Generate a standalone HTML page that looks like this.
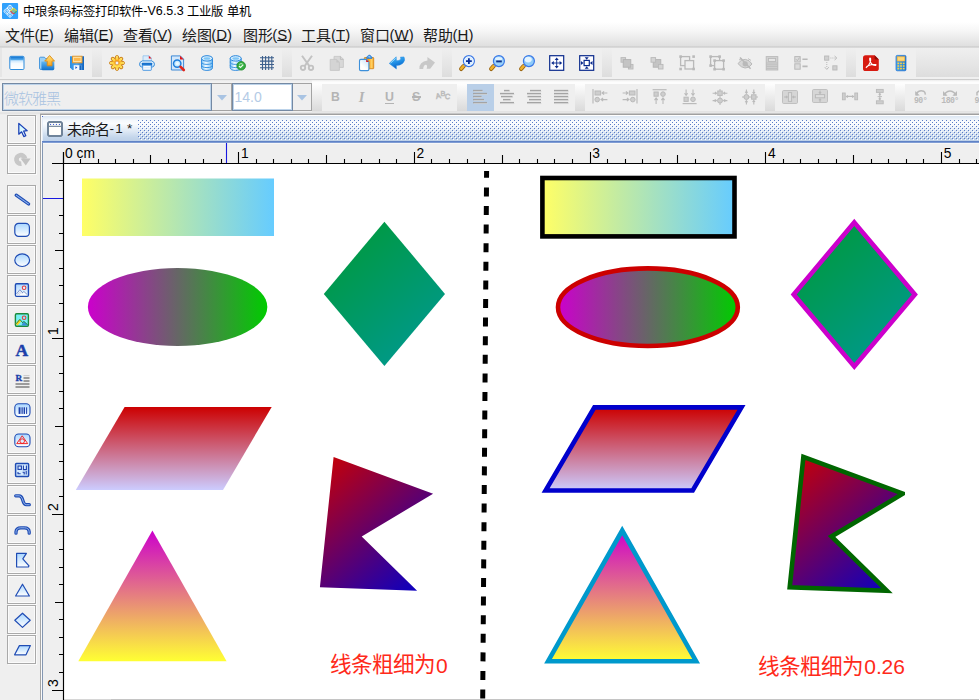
<!DOCTYPE html>
<html><head><meta charset="utf-8"><title>label</title>
<style>
html,body{margin:0;padding:0}
body{width:979px;height:700px;overflow:hidden;position:relative;background:#fff;font-family:"Liberation Sans",sans-serif}
.a{position:absolute;display:block;overflow:visible}
.t{white-space:pre}
u{text-decoration:underline;text-decoration-thickness:1px;text-underline-offset:0.3px;text-decoration-skip-ink:none}
</style></head><body>

<div class="a" style="left:0px;top:0px;width:979px;height:22px;background:#fff"></div>
<svg class="a" style="left:2px;top:3px" width="16" height="16" ><rect x="0" y="-0.1" width="16.1" height="16.1" rx="1" fill="#31a1fc"/><g transform="rotate(45 8 4.9)" fill="none" stroke="#fff" opacity="1"><rect x="5.7" y="2.6000000000000005" width="4.6" height="4.6" rx="1.5" stroke-width="0.85"/><rect x="6.95" y="3.8500000000000005" width="2.1" height="2.1" rx="0.8" stroke-width="0.8"/></g><g transform="rotate(45 4.7 8.2)" fill="none" stroke="#fff" opacity="1"><rect x="2.4000000000000004" y="5.8999999999999995" width="4.6" height="4.6" rx="1.5" stroke-width="0.85"/><rect x="3.6500000000000004" y="7.1499999999999995" width="2.1" height="2.1" rx="0.8" stroke-width="0.8"/></g><g transform="rotate(45 8 11.5)" fill="none" stroke="#fff" opacity="1"><rect x="5.7" y="9.2" width="4.6" height="4.6" rx="1.5" stroke-width="0.85"/><rect x="6.95" y="10.45" width="2.1" height="2.1" rx="0.8" stroke-width="0.8"/></g><g transform="rotate(45 11.6 8.1)" fill="none" stroke-width="1"><path d="M9.4 10.3V7.4Q9.4 5.9 10.9 5.9H13.8" stroke="#f2dc1e"/><path d="M9.4 10.3H12.3Q13.8 10.3 13.8 8.8" stroke="#e8403a"/><path d="M13.8 5.9V8.8" stroke="#48b848"/><rect x="10.7" y="7.2" width="1.8" height="1.8" rx="0.6" stroke="#f0d820" stroke-width="0.8"/></g></svg>
<svg class="a" style="left:22.70px;top:5.03px" width="122.3" height="13.5" fill="#000" ><text x="0" y="11.07" font-family="'Liberation Sans','Noto Sans CJK SC',sans-serif" font-size="12.3" letter-spacing="-0.3" fill="#000">中琅条码标签打印软件</text></svg>
<div class="a t" style="left:143.30px;top:4.79px;font:normal 12.5px/13.96px 'Liberation Sans',sans-serif;color:#000;">-V6.5.3</div>
<svg class="a" style="left:186.90px;top:5.03px" width="38.3" height="13.5" fill="#000" ><text x="0" y="11.07" font-family="'Liberation Sans','Noto Sans CJK SC',sans-serif" font-size="12.3" letter-spacing="-0.3" fill="#000">工业版</text></svg>
<svg class="a" style="left:226.80px;top:5.03px" width="26.3" height="13.5" fill="#000" ><text x="0" y="11.07" font-family="'Liberation Sans','Noto Sans CJK SC',sans-serif" font-size="12.3" letter-spacing="-0.3" fill="#000">单机</text></svg>
<div class="a" style="left:0px;top:22px;width:979px;height:25px;background:linear-gradient(#ffffff 0%,#f6f6f6 35%,#e9e9e9 70%,#dedede 100%)"></div>
<div class="a" style="left:0px;top:46px;width:979px;height:2px;background:linear-gradient(#cfcfcf,#dcdcdc)"></div>
<svg class="a" style="left:5.00px;top:27.40px" width="32.0" height="16.5" fill="#1a1a1a" ><text x="0" y="13.5" font-family="'Liberation Sans','Noto Sans CJK SC',sans-serif" font-size="15" fill="#1a1a1a">文件</text></svg>
<div class="a t" style="left:34.60px;top:27.42px;font:normal 15px/16.75px 'Liberation Sans',sans-serif;color:#1a1a1a;">(<u>F</u>)</div>
<svg class="a" style="left:64.00px;top:27.40px" width="32.0" height="16.5" fill="#1a1a1a" ><text x="0" y="13.5" font-family="'Liberation Sans','Noto Sans CJK SC',sans-serif" font-size="15" fill="#1a1a1a">编辑</text></svg>
<div class="a t" style="left:93.60px;top:27.42px;font:normal 15px/16.75px 'Liberation Sans',sans-serif;color:#1a1a1a;">(<u>E</u>)</div>
<svg class="a" style="left:122.60px;top:27.40px" width="32.0" height="16.5" fill="#1a1a1a" ><text x="0" y="13.5" font-family="'Liberation Sans','Noto Sans CJK SC',sans-serif" font-size="15" fill="#1a1a1a">查看</text></svg>
<div class="a t" style="left:152.20px;top:27.42px;font:normal 15px/16.75px 'Liberation Sans',sans-serif;color:#1a1a1a;">(<u>V</u>)</div>
<svg class="a" style="left:181.60px;top:27.40px" width="32.0" height="16.5" fill="#1a1a1a" ><text x="0" y="13.5" font-family="'Liberation Sans','Noto Sans CJK SC',sans-serif" font-size="15" fill="#1a1a1a">绘图</text></svg>
<div class="a t" style="left:211.20px;top:27.42px;font:normal 15px/16.75px 'Liberation Sans',sans-serif;color:#1a1a1a;">(<u>D</u>)</div>
<svg class="a" style="left:242.60px;top:27.40px" width="32.0" height="16.5" fill="#1a1a1a" ><text x="0" y="13.5" font-family="'Liberation Sans','Noto Sans CJK SC',sans-serif" font-size="15" fill="#1a1a1a">图形</text></svg>
<div class="a t" style="left:272.20px;top:27.42px;font:normal 15px/16.75px 'Liberation Sans',sans-serif;color:#1a1a1a;">(<u>S</u>)</div>
<svg class="a" style="left:301.40px;top:27.40px" width="32.0" height="16.5" fill="#1a1a1a" ><text x="0" y="13.5" font-family="'Liberation Sans','Noto Sans CJK SC',sans-serif" font-size="15" fill="#1a1a1a">工具</text></svg>
<div class="a t" style="left:331.00px;top:27.42px;font:normal 15px/16.75px 'Liberation Sans',sans-serif;color:#1a1a1a;">(<u>T</u>)</div>
<svg class="a" style="left:360.00px;top:27.40px" width="32.0" height="16.5" fill="#1a1a1a" ><text x="0" y="13.5" font-family="'Liberation Sans','Noto Sans CJK SC',sans-serif" font-size="15" fill="#1a1a1a">窗口</text></svg>
<div class="a t" style="left:389.60px;top:27.42px;font:normal 15px/16.75px 'Liberation Sans',sans-serif;color:#1a1a1a;">(<u>W</u>)</div>
<svg class="a" style="left:423.00px;top:27.40px" width="32.0" height="16.5" fill="#1a1a1a" ><text x="0" y="13.5" font-family="'Liberation Sans','Noto Sans CJK SC',sans-serif" font-size="15" fill="#1a1a1a">帮助</text></svg>
<div class="a t" style="left:452.60px;top:27.42px;font:normal 15px/16.75px 'Liberation Sans',sans-serif;color:#1a1a1a;">(<u>H</u>)</div>
<div class="a" style="left:0px;top:48px;width:979px;height:31px;background:linear-gradient(#efefef 0%,#e6e6e6 50%,#dcdcdc 100%)"></div>
<div class="a" style="left:0px;top:77px;width:979px;height:2px;background:#f0f0f0"></div>
<div class="a" style="left:0px;top:79px;width:979px;height:1px;background:#cdcdcd"></div>
<div class="a" style="left:1.5px;top:48px;width:90.9px;height:29px;background:#efefef"></div>
<div class="a" style="left:101.5px;top:48px;width:180.89999999999998px;height:29px;background:#efefef"></div>
<div class="a" style="left:292px;top:48px;width:150px;height:29px;background:#efefef"></div>
<div class="a" style="left:452px;top:48px;width:150px;height:29px;background:#efefef"></div>
<div class="a" style="left:612px;top:48px;width:234px;height:29px;background:#efefef"></div>
<div class="a" style="left:856px;top:48px;width:60px;height:29px;background:#efefef"></div>
<div class="a" style="left:0px;top:48px;width:1.5px;height:29px;background:#e6e6e6"></div>
<div class="a" style="left:0px;top:80px;width:979px;height:33px;background:linear-gradient(#ececec 0px,#fdfdfd 2px,#fdfdfd 4px,#dadada 31px,#ececec 32px)"></div>
<div class="a" style="left:0px;top:80px;width:312px;height:33px;background:linear-gradient(#e9e9e9 0px,#f3f3f3 2px,#f0f0f0 100%)"></div>
<div class="a" style="left:322px;top:84px;width:135px;height:27px;background:#efefef"></div>
<div class="a" style="left:467px;top:84px;width:108px;height:27px;background:#efefef"></div>
<div class="a" style="left:585px;top:84px;width:180px;height:27px;background:#efefef"></div>
<div class="a" style="left:775px;top:84px;width:120px;height:27px;background:#efefef"></div>
<div class="a" style="left:905px;top:84px;width:74px;height:27px;background:#efefef"></div>
<div class="a" style="left:0px;top:112px;width:979px;height:1px;background:#e6e6e6"></div>
<div class="a" style="left:0px;top:113px;width:40px;height:1px;background:#e4e4e4"></div>
<div class="a" style="left:40px;top:113px;width:939px;height:1px;background:#c6c6c6"></div>
<div class="a" style="left:0px;top:114px;width:40px;height:1px;background:#ededed"></div>
<div class="a" style="left:40px;top:114px;width:939px;height:1px;background:#a0a0a0"></div>
<div class="a" style="left:0px;top:115px;width:41px;height:1px;background:#f0f0f0"></div>
<div class="a" style="left:41px;top:115px;width:938px;height:1px;background:#fff"></div>
<div class="a" style="left:2px;top:83px;width:210px;height:28px;box-sizing:border-box;border:1px solid #7489a3;background:#efefef;box-shadow:inset 0 0 0 1px #bcd3ea"></div>
<div class="a" style="left:212px;top:83px;width:20px;height:28px;box-sizing:border-box;border:1px solid #a3a3a3;border-left:none;background:#efefef"></div>
<svg class="a" style="left:217px;top:95px" width="10" height="6" ><path d="M0 0H10L5 5.6z" fill="#a9c4e3"/></svg>
<svg class="a" style="left:3.90px;top:89.50px" width="59.0" height="16.5" fill="#a9c3e1" ><text x="0" y="13.5" font-family="'Liberation Sans','Noto Sans CJK SC',sans-serif" font-size="15" font-weight="300" letter-spacing="-1" fill="#a9c3e1">微软雅黑</text></svg>
<div class="a" style="left:232px;top:83px;width:61px;height:28px;box-sizing:border-box;border:1px solid #7489a3;background:#fff;box-shadow:inset 0 0 0 1px #bcd3ea"></div>
<div class="a" style="left:293px;top:83px;width:19px;height:28px;box-sizing:border-box;border:1px solid #a3a3a3;border-left:none;background:#efefef"></div>
<svg class="a" style="left:297px;top:95px" width="10" height="6" ><path d="M0 0H10L5 5.6z" fill="#a9c4e3"/></svg>
<div class="a t" style="left:234.50px;top:89.53px;font:normal 14px/15.64px 'Liberation Sans',sans-serif;color:#b4cbe6;">14.0</div>
<div class="a" style="left:0px;top:116px;width:979px;height:584px;background:#efefef"></div>
<div class="a" style="left:40px;top:115px;width:1px;height:585px;background:#a6a6a6"></div>
<div class="a" style="left:41px;top:116px;width:1px;height:584px;background:#fbfbfb"></div>
<div class="a" style="left:42px;top:141px;width:1px;height:559px;background:#8497b2"></div>
<div class="a" style="left:42px;top:116px;width:1px;height:25px;background:#e6eef8"></div>
<div class="a" style="left:7px;top:115px;width:29px;height:29px;box-sizing:border-box;border:1px solid #a9a9a9;background:#f0f0f0;box-shadow:inset 0 0 0 1px #fbfbfb,1px 1px 0 #fafafa"></div>
<div class="a" style="left:7px;top:145px;width:29px;height:29px;box-sizing:border-box;border:1px solid #a9a9a9;background:#f0f0f0;box-shadow:inset 0 0 0 1px #fbfbfb,1px 1px 0 #fafafa"></div>
<div class="a" style="left:7px;top:185px;width:29px;height:29px;box-sizing:border-box;border:1px solid #a9a9a9;background:#f0f0f0;box-shadow:inset 0 0 0 1px #fbfbfb,1px 1px 0 #fafafa"></div>
<div class="a" style="left:7px;top:215px;width:29px;height:29px;box-sizing:border-box;border:1px solid #a9a9a9;background:#f0f0f0;box-shadow:inset 0 0 0 1px #fbfbfb,1px 1px 0 #fafafa"></div>
<div class="a" style="left:7px;top:245px;width:29px;height:29px;box-sizing:border-box;border:1px solid #a9a9a9;background:#f0f0f0;box-shadow:inset 0 0 0 1px #fbfbfb,1px 1px 0 #fafafa"></div>
<div class="a" style="left:7px;top:275px;width:29px;height:29px;box-sizing:border-box;border:1px solid #a9a9a9;background:#f0f0f0;box-shadow:inset 0 0 0 1px #fbfbfb,1px 1px 0 #fafafa"></div>
<div class="a" style="left:7px;top:305px;width:29px;height:29px;box-sizing:border-box;border:1px solid #a9a9a9;background:#f0f0f0;box-shadow:inset 0 0 0 1px #fbfbfb,1px 1px 0 #fafafa"></div>
<div class="a" style="left:7px;top:335px;width:29px;height:29px;box-sizing:border-box;border:1px solid #a9a9a9;background:#f0f0f0;box-shadow:inset 0 0 0 1px #fbfbfb,1px 1px 0 #fafafa"></div>
<div class="a" style="left:7px;top:365px;width:29px;height:29px;box-sizing:border-box;border:1px solid #a9a9a9;background:#f0f0f0;box-shadow:inset 0 0 0 1px #fbfbfb,1px 1px 0 #fafafa"></div>
<div class="a" style="left:7px;top:395px;width:29px;height:29px;box-sizing:border-box;border:1px solid #a9a9a9;background:#f0f0f0;box-shadow:inset 0 0 0 1px #fbfbfb,1px 1px 0 #fafafa"></div>
<div class="a" style="left:7px;top:425px;width:29px;height:29px;box-sizing:border-box;border:1px solid #a9a9a9;background:#f0f0f0;box-shadow:inset 0 0 0 1px #fbfbfb,1px 1px 0 #fafafa"></div>
<div class="a" style="left:7px;top:455px;width:29px;height:29px;box-sizing:border-box;border:1px solid #a9a9a9;background:#f0f0f0;box-shadow:inset 0 0 0 1px #fbfbfb,1px 1px 0 #fafafa"></div>
<div class="a" style="left:7px;top:485px;width:29px;height:29px;box-sizing:border-box;border:1px solid #a9a9a9;background:#f0f0f0;box-shadow:inset 0 0 0 1px #fbfbfb,1px 1px 0 #fafafa"></div>
<div class="a" style="left:7px;top:515px;width:29px;height:29px;box-sizing:border-box;border:1px solid #a9a9a9;background:#f0f0f0;box-shadow:inset 0 0 0 1px #fbfbfb,1px 1px 0 #fafafa"></div>
<div class="a" style="left:7px;top:545px;width:29px;height:29px;box-sizing:border-box;border:1px solid #a9a9a9;background:#f0f0f0;box-shadow:inset 0 0 0 1px #fbfbfb,1px 1px 0 #fafafa"></div>
<div class="a" style="left:7px;top:575px;width:29px;height:29px;box-sizing:border-box;border:1px solid #a9a9a9;background:#f0f0f0;box-shadow:inset 0 0 0 1px #fbfbfb,1px 1px 0 #fafafa"></div>
<div class="a" style="left:7px;top:605px;width:29px;height:29px;box-sizing:border-box;border:1px solid #a9a9a9;background:#f0f0f0;box-shadow:inset 0 0 0 1px #fbfbfb,1px 1px 0 #fafafa"></div>
<div class="a" style="left:7px;top:635px;width:29px;height:29px;box-sizing:border-box;border:1px solid #a9a9a9;background:#f0f0f0;box-shadow:inset 0 0 0 1px #fbfbfb,1px 1px 0 #fafafa"></div>
<div class="a" style="left:43px;top:116px;width:936px;height:25px;background:linear-gradient(#dbe6f3 0%,#f4f8fc 18%,#fafcfe 30%,#dfe9f5 60%,#c4d6eb 85%,#bdd0e8 100%)"></div>
<div class="a" style="left:42px;top:141px;width:937px;height:1px;background:#5f82c6"></div>
<div class="a" style="left:42px;top:142px;width:937px;height:1px;background:#7f9cd3"></div>
<div class="a" style="left:43px;top:143px;width:936px;height:1px;background:#f7f7f7"></div>
<svg class="a" style="left:138px;top:120px" width="841" height="20"><defs>
<pattern id="dots" width="4" height="4" patternUnits="userSpaceOnUse">
<rect x="0" y="0" width="1" height="1" fill="#5b7cc8"/><rect x="1" y="1" width="1" height="1" fill="#ffffff"/>
<rect x="2" y="2" width="1" height="1" fill="#5b7cc8"/><rect x="3" y="3" width="1" height="1" fill="#ffffff"/>
</pattern></defs><rect width="841" height="20" fill="url(#dots)"/></svg>
<div class="a" style="left:42px;top:116px;width:1px;height:1px;background:#4466cc"></div>
<svg class="a" style="left:47px;top:121px" width="16" height="16" ><path d="M1 2.2L2.2 1H13.8L15 2.2V13.8L13.8 15H2.2L1 13.8z" fill="#fffefb" stroke="#6f8399" stroke-width="2" stroke-linejoin="miter"/>
<rect x="2" y="4.75" width="12" height="1.15" fill="#6f8399"/>
<g fill="#4563d2"><rect x="3" y="2.9" width="1.1" height="1.1"/><rect x="5.95" y="2.9" width="1.1" height="1.1"/><rect x="8.9" y="2.9" width="1.1" height="1.1"/><rect x="11.9" y="2.9" width="1.1" height="1.1"/></g></svg>
<svg class="a" style="left:66.80px;top:120.70px" width="45.0" height="16.5" fill="#1a1a1a" ><text x="0" y="13.5" font-family="'Liberation Sans','Noto Sans CJK SC',sans-serif" font-size="15" letter-spacing="-1" fill="#1a1a1a">未命名</text></svg>
<div class="a t" style="left:109.60px;top:121.38px;font:normal 13.5px/15.08px 'Liberation Sans',sans-serif;color:#1a1a1a;">-</div>
<div class="a t" style="left:115.20px;top:121.38px;font:normal 13.5px/15.08px 'Liberation Sans',sans-serif;color:#1a1a1a;">1</div>
<div class="a t" style="left:127.00px;top:120.58px;font:normal 13.5px/15.08px 'Liberation Sans',sans-serif;color:#1a1a1a;">*</div>
<div class="a" style="left:64px;top:164px;width:915px;height:536px;background:#fff"></div>
<div class="a" style="left:64px;top:699px;width:915px;height:1px;background:#d6d6d6"></div>
<div class="a" style="left:111px;top:699px;width:868px;height:1px;background:#c4c4c4"></div>
<svg class="a" style="left:0px;top:0px" width="979" height="700" shape-rendering="auto"><path d="M52 163.5H979M63.5 152V700" stroke="#000" stroke-width="1.15" fill="none"/><path d="M63.50 152V163M80.50 159V163M98.50 159V163M115.50 159V163M133.50 159V163M150.50 155V163M168.50 159V163M185.50 159V163M203.50 159V163M221.50 159V163M238.50 152V163M256.50 159V163M273.50 159V163M291.50 159V163M308.50 159V163M326.50 155V163M344.50 159V163M361.50 159V163M379.50 159V163M396.50 159V163M414.50 152V163M431.50 159V163M449.50 159V163M467.50 159V163M484.50 159V163M502.50 155V163M519.50 159V163M537.50 159V163M554.50 159V163M572.50 159V163M590.50 152V163M607.50 159V163M625.50 159V163M642.50 159V163M660.50 159V163M677.50 155V163M695.50 159V163M713.50 159V163M730.50 159V163M748.50 159V163M765.50 152V163M783.50 159V163M800.50 159V163M818.50 159V163M836.50 159V163M853.50 155V163M871.50 159V163M888.50 159V163M906.50 159V163M923.50 159V163M941.50 152V163M959.50 159V163M976.50 159V163M59 180.50H63M59 198.50H63M59 215.50H63M59 233.50H63M55 250.50H63M59 268.50H63M59 285.50H63M59 303.50H63M59 321.50H63M52 338.50H63M59 356.50H63M59 373.50H63M59 391.50H63M59 408.50H63M55 426.50H63M59 444.50H63M59 461.50H63M59 479.50H63M59 496.50H63M52 514.50H63M59 531.50H63M59 549.50H63M59 567.50H63M59 584.50H63M55 602.50H63M59 619.50H63M59 637.50H63M59 654.50H63M59 672.50H63M52 690.50H63" stroke="#000" stroke-width="1.1" fill="none"/><path d="M226.5 143V163M43 198.5H63" stroke="#1818e0" stroke-width="1.1" fill="none"/></svg>
<div class="a t" style="left:65.10px;top:145.91px;font:normal 13.8px/15.41px 'Liberation Sans',sans-serif;color:#000;">0 cm</div>
<div class="a t" style="left:240.90px;top:145.91px;font:normal 13.8px/15.41px 'Liberation Sans',sans-serif;color:#000;">1</div>
<div class="a t" style="left:416.60px;top:145.91px;font:normal 13.8px/15.41px 'Liberation Sans',sans-serif;color:#000;">2</div>
<div class="a t" style="left:592.30px;top:145.91px;font:normal 13.8px/15.41px 'Liberation Sans',sans-serif;color:#000;">3</div>
<div class="a t" style="left:768.00px;top:145.91px;font:normal 13.8px/15.41px 'Liberation Sans',sans-serif;color:#000;">4</div>
<div class="a t" style="left:943.70px;top:145.91px;font:normal 13.8px/15.41px 'Liberation Sans',sans-serif;color:#000;">5</div>
<div class="a t" style="left:58px;top:335.30px;font:14px/14px 'Liberation Sans',sans-serif;color:#000;transform-origin:0 0;transform:rotate(-90deg) translate(0,-12px)">1</div>
<div class="a t" style="left:58px;top:511.10px;font:14px/14px 'Liberation Sans',sans-serif;color:#000;transform-origin:0 0;transform:rotate(-90deg) translate(0,-12px)">2</div>
<div class="a t" style="left:58px;top:686.90px;font:14px/14px 'Liberation Sans',sans-serif;color:#000;transform-origin:0 0;transform:rotate(-90deg) translate(0,-12px)">3</div>
<svg class="a" style="left:0px;top:0px" width="979" height="700" ><defs>
<linearGradient id="g1" x1="0" x2="1" y1="0" y2="0"><stop offset="0" stop-color="#ffff66"/><stop offset="1" stop-color="#66ccff"/></linearGradient>
<linearGradient id="g2" x1="0" x2="1" y1="0" y2="0"><stop offset="0" stop-color="#cc00cc"/><stop offset="1" stop-color="#00cc00"/></linearGradient>
<linearGradient id="g3" gradientUnits="userSpaceOnUse" x1="323.8" y1="221.7" x2="445" y2="365.9"><stop offset="0" stop-color="#009933"/><stop offset="1" stop-color="#009999"/></linearGradient>
<linearGradient id="g3b" gradientUnits="userSpaceOnUse" x1="793.7" y1="222.4" x2="914.9" y2="366.4"><stop offset="0" stop-color="#009933"/><stop offset="1" stop-color="#009999"/></linearGradient>
<linearGradient id="g4" x1="0" x2="0" y1="0" y2="1"><stop offset="0" stop-color="#cc0000"/><stop offset="1" stop-color="#ccccff"/></linearGradient>
<linearGradient id="g5" x1="0" x2="0" y1="0" y2="1"><stop offset="0" stop-color="#cc00cc"/><stop offset="1" stop-color="#ffff33"/></linearGradient>
<linearGradient id="g6" gradientUnits="userSpaceOnUse" x1="319.9" y1="456.9" x2="433.1" y2="590.7"><stop offset="0" stop-color="#cc0000"/><stop offset="1" stop-color="#0000cc"/></linearGradient>
<linearGradient id="g6b" gradientUnits="userSpaceOnUse" x1="789.7" y1="456.9" x2="902.9" y2="590.7"><stop offset="0" stop-color="#cc0000"/><stop offset="1" stop-color="#0000cc"/></linearGradient>
<clipPath id="cp"><rect x="780" y="440" width="125" height="170"/></clipPath>
</defs><rect x="82" y="178.5" width="192" height="57.5" fill="url(#g1)"/><ellipse cx="177.6" cy="307" rx="89.7" ry="39.1" fill="url(#g2)"/><path d="M384.4 221.7L445 293.9L384.4 365.9L323.8 293.9z" fill="url(#g3)"/><path d="M124.6 406.9H271.7L223 490H75.8z" fill="url(#g4)"/><path d="M152.4 530.4L226.6 661.2H78.3z" fill="url(#g5)"/><path d="M333.6 456.9L433.1 493.7L361.7 536.5L417.1 590.7L319.9 587.3z" fill="url(#g6)"/><path d="M486.6 171L482.7 700" stroke="#000" stroke-width="5" stroke-dasharray="9 9.6" stroke-dashoffset="2.2" fill="none"/><rect x="542.4" y="178" width="192.1" height="58.4" fill="url(#g1)" stroke="#000" stroke-width="4.6"/><ellipse cx="647.9" cy="307.2" rx="89.9" ry="38.8" fill="url(#g2)" stroke="#cc0000" stroke-width="4.6"/><path d="M854.3 222.4L914.9 294.4L854.3 366.4L793.7 294.4z" fill="url(#g3b)" stroke="#cc00cc" stroke-width="4.6" stroke-miterlimit="10"/><path d="M594.4 407.4H741.5L692.7 490.5H545.6z" fill="url(#g4)" stroke="#0000cc" stroke-width="4.6" stroke-miterlimit="10"/><path d="M622.2 530.5L696.1 661.2H548.1z" fill="url(#g5)" stroke="#0099cc" stroke-width="4.6" stroke-miterlimit="10"/><path clip-path="url(#cp)" d="M803.4 456.9L902.9 493.7L831.5 536.5L886.9 590.7L789.7 587.3z" fill="url(#g6b)" stroke="#006600" stroke-width="4.6" stroke-miterlimit="10"/></svg>
<svg class="a" style="left:330.40px;top:653.26px" width="107.6" height="23.8" fill="#ff2a1a" ><text x="0" y="19.44" font-family="'Liberation Sans','Noto Sans CJK SC',sans-serif" font-size="21.6" letter-spacing="-0.6" fill="#ff2a1a">线条粗细为</text></svg>
<div class="a t" style="left:436.00px;top:654.00px;font:normal 21px/23.46px 'Liberation Sans',sans-serif;color:#ff2a1a;">0</div>
<svg class="a" style="left:758.10px;top:654.66px" width="107.6" height="23.8" fill="#ff2a1a" ><text x="0" y="19.44" font-family="'Liberation Sans','Noto Sans CJK SC',sans-serif" font-size="21.6" letter-spacing="-0.6" fill="#ff2a1a">线条粗细为</text></svg>
<div class="a t" style="left:864.30px;top:655.29px;font:normal 21px/23.46px 'Liberation Sans',sans-serif;color:#ff2a1a;letter-spacing:-0.1px;">0.26</div>
<svg class="a" style="left:9px;top:55px" width="16" height="16" viewBox="0 0 16 16" ><defs><linearGradient id="in1" x1="0" y1="0" x2="0" y2="1"><stop offset="0" stop-color="#8cc8f8"/><stop offset="0.55" stop-color="#f4faff"/><stop offset="1" stop-color="#ffffff"/></linearGradient>
<linearGradient id="in2" x1="0" y1="0" x2="0" y2="1"><stop offset="0" stop-color="#1273d0"/><stop offset="1" stop-color="#5cb2f0"/></linearGradient></defs>
<rect x="0.8" y="1.3" width="14.2" height="13.2" rx="1.1" fill="url(#in1)" stroke="#2d8bdc" stroke-width="1"/>
<path d="M1.3 5.2V2.8Q1.3 1.8 2.3 1.8H13.5Q14.5 1.8 14.5 2.8V5.2z" fill="url(#in2)"/></svg>
<svg class="a" style="left:39px;top:55px" width="16" height="16" viewBox="0 0 16 16" ><defs><linearGradient id="io1" x1="0" y1="0" x2="0" y2="1"><stop offset="0" stop-color="#62b8f3"/><stop offset="1" stop-color="#0f6fcb"/></linearGradient>
<linearGradient id="io2" x1="0" y1="0" x2="0" y2="1"><stop offset="0" stop-color="#ffe27a"/><stop offset="1" stop-color="#f9a21c"/></linearGradient></defs>
<path d="M0.5 3.2Q0.5 2.2 1.5 2.2H5.4L6.6 3.6H9V14.5H2Q0.5 14.5 0.5 13z" fill="#9ad0f7" stroke="#2a86d8" stroke-width="0.8"/>
<path d="M2.4 6.4H15.3V13.8Q15.3 15.2 13.9 15.2H3.6Q2.4 15.2 2.4 13.8z" fill="url(#io1)"/>
<path d="M10.6 0.5L15.5 6.1H13V10.8H8.2V6.1H5.7z" fill="url(#io2)" stroke="#dc8a14" stroke-width="0.9" stroke-linejoin="round"/></svg>
<svg class="a" style="left:69px;top:55px" width="16" height="16" viewBox="0 0 16 16" ><defs><linearGradient id="is1" x1="0" y1="0" x2="1" y2="0"><stop offset="0" stop-color="#2c8fe2"/><stop offset="0.5" stop-color="#4ea6f0"/><stop offset="1" stop-color="#0e62c0"/></linearGradient></defs>
<path d="M1 1.2H15V15H3.4L1 12.6z" fill="url(#is1)"/>
<rect x="3.6" y="1.2" width="9.4" height="6.6" fill="#ffe2a4" stroke="#e49322" stroke-width="0.9"/>
<rect x="5" y="2.9" width="6.6" height="3" fill="#ffb84a"/>
<rect x="4.7" y="10.2" width="7.6" height="4.8" fill="#f6faff"/>
<rect x="10.4" y="10.2" width="1.9" height="4.8" fill="#1565c0"/>
<path d="M6.4 11.2V14L8.4 12.6z" fill="#1a55c8"/></svg>
<svg class="a" style="left:109px;top:55px" width="16" height="16" viewBox="0 0 16 16" ><defs><linearGradient id="ig1" x1="0" y1="0" x2="0" y2="1"><stop offset="0" stop-color="#f5941a"/><stop offset="0.55" stop-color="#ffc130"/><stop offset="1" stop-color="#ffe964"/></linearGradient></defs>
<g fill="#fff0a0" stroke="#cc8016" stroke-width="0.95"><rect x="6.45" y="0.55" width="3.1" height="4.6" rx="1.45" transform="rotate(0 8 8)"/><rect x="6.45" y="0.55" width="3.1" height="4.6" rx="1.45" transform="rotate(45 8 8)"/><rect x="6.45" y="0.55" width="3.1" height="4.6" rx="1.45" transform="rotate(90 8 8)"/><rect x="6.45" y="0.55" width="3.1" height="4.6" rx="1.45" transform="rotate(135 8 8)"/><rect x="6.45" y="0.55" width="3.1" height="4.6" rx="1.45" transform="rotate(180 8 8)"/><rect x="6.45" y="0.55" width="3.1" height="4.6" rx="1.45" transform="rotate(225 8 8)"/><rect x="6.45" y="0.55" width="3.1" height="4.6" rx="1.45" transform="rotate(270 8 8)"/><rect x="6.45" y="0.55" width="3.1" height="4.6" rx="1.45" transform="rotate(315 8 8)"/></g>
<circle cx="8" cy="8" r="4.5" fill="url(#ig1)"/>
<g fill="#ffd84a"><rect x="7" y="1.4" width="2" height="3.4" rx="0.9" transform="rotate(0 8 8)"/><rect x="7" y="1.4" width="2" height="3.4" rx="0.9" transform="rotate(45 8 8)"/><rect x="7" y="1.4" width="2" height="3.4" rx="0.9" transform="rotate(90 8 8)"/><rect x="7" y="1.4" width="2" height="3.4" rx="0.9" transform="rotate(135 8 8)"/><rect x="7" y="1.4" width="2" height="3.4" rx="0.9" transform="rotate(180 8 8)"/><rect x="7" y="1.4" width="2" height="3.4" rx="0.9" transform="rotate(225 8 8)"/><rect x="7" y="1.4" width="2" height="3.4" rx="0.9" transform="rotate(270 8 8)"/><rect x="7" y="1.4" width="2" height="3.4" rx="0.9" transform="rotate(315 8 8)"/></g>
<circle cx="8" cy="8" r="1.95" fill="#eef0fc" stroke="#e0881a" stroke-width="0.8"/></svg>
<svg class="a" style="left:139px;top:55px" width="16" height="16" viewBox="0 0 16 16" ><defs><linearGradient id="ip1" x1="0" y1="0" x2="0" y2="1"><stop offset="0" stop-color="#f8fcff"/><stop offset="1" stop-color="#b9dbf8"/></linearGradient></defs>
<path d="M4 0.8H10.2L12.4 3V7H4z" fill="#d9ebfb" stroke="#8fc2ee" stroke-width="0.8"/>
<path d="M9.8 0.7L12.6 3.5H9.8z" fill="#e01418"/>
<path d="M3.4 5.9H12.6Q15.4 6.6 15.5 9.2Q15.4 11.6 13.4 12H2.6Q0.6 11.6 0.5 9.2Q0.6 6.6 3.4 5.9z" fill="url(#ip1)" stroke="#2a86d8" stroke-width="0.9"/>
<rect x="2.9" y="7.7" width="10.2" height="3.1" rx="0.5" fill="#1670cc"/>
<rect x="3.7" y="10.2" width="8.6" height="5.1" rx="0.5" fill="#f8fbff" stroke="#3b8fe0" stroke-width="0.9"/>
<path d="M5.2 12.8H10.8" stroke="#d6e7f8" stroke-width="1"/></svg>
<svg class="a" style="left:170px;top:55px" width="16" height="16" viewBox="0 0 16 16" ><path d="M1.4 0.9H10.4L13.6 4.1V15H1.4z" fill="#d2e7fb" stroke="#2a7fd4" stroke-width="0.9"/>
<path d="M10 0.8L13.8 4.6H10z" fill="#e01418"/>
<circle cx="7.2" cy="8.6" r="3.7" fill="#c6eaff" stroke="#1f7fdc" stroke-width="1.5"/>
<circle cx="7.4" cy="8.4" r="1.5" fill="#eefaff"/>
<path d="M10.6 11.8L13.8 15" stroke="#e0261c" stroke-width="2.6" stroke-linecap="round"/></svg>
<svg class="a" style="left:199px;top:55px" width="16" height="16" viewBox="0 0 16 16" ><defs><linearGradient id="id1" x1="0" y1="0" x2="1" y2="0"><stop offset="0" stop-color="#7cc4f6"/><stop offset="0.4" stop-color="#f2faff"/><stop offset="1" stop-color="#6cbaf2"/></linearGradient></defs>
<path d="M2.5 3.4V12.6Q2.5 15.4 8 15.4Q13.5 15.4 13.5 12.6V3.4z" fill="url(#id1)" stroke="#2585dc" stroke-width="0.9"/>
<ellipse cx="8" cy="3.4" rx="5.5" ry="2.7" fill="#d9efff" stroke="#2585dc" stroke-width="1"/>
<ellipse cx="8" cy="3.5" rx="3.4" ry="1.3" fill="#7fc6f6"/>
<path d="M2.5 6.8Q2.5 9.4 8 9.4Q13.5 9.4 13.5 6.8M2.5 10Q2.5 12.6 8 12.6Q13.5 12.6 13.5 10" fill="none" stroke="#3a95e4" stroke-width="1"/></svg>
<svg class="a" style="left:229.5px;top:55px" width="16" height="16" viewBox="0 0 16 16" ><g transform="translate(-2.3 0)"><defs><linearGradient id="id2" x1="0" y1="0" x2="1" y2="0"><stop offset="0" stop-color="#7cc4f6"/><stop offset="0.4" stop-color="#f2faff"/><stop offset="1" stop-color="#6cbaf2"/></linearGradient></defs>
<path d="M2.5 3.4V12.6Q2.5 15.4 8 15.4Q13.5 15.4 13.5 12.6V3.4z" fill="url(#id2)" stroke="#2585dc" stroke-width="0.9"/>
<ellipse cx="8" cy="3.4" rx="5.5" ry="2.7" fill="#d9efff" stroke="#2585dc" stroke-width="1"/>
<ellipse cx="8" cy="3.5" rx="3.4" ry="1.3" fill="#7fc6f6"/>
<path d="M2.5 6.8Q2.5 9.4 8 9.4Q13.5 9.4 13.5 6.8M2.5 10Q2.5 12.6 8 12.6Q13.5 12.6 13.5 10" fill="none" stroke="#3a95e4" stroke-width="1"/></g><circle cx="11.2" cy="10.8" r="4.3" fill="#35ad40" stroke="#1c8a2a" stroke-width="0.8"/>
<path d="M9 11L10.5 12.4L13.3 9.6" fill="none" stroke="#e8ffe8" stroke-width="1.3"/><path d="M9.2 9.4Q11 8 12.6 9" fill="none" stroke="#c9f5c9" stroke-width="0.9"/></svg>
<svg class="a" style="left:259px;top:55px" width="16" height="16" viewBox="0 0 16 16" ><path d="M3.5 1V15M6.6 1V15M9.7 1V15M12.8 1V15M1 2.8H15M1 6.1H15M1 9.5H15M1 12.8H15" stroke="#3c5f8c" stroke-width="1.1" fill="none"/></svg>
<svg class="a" style="left:299px;top:55px" width="16" height="16" viewBox="0 0 16 16" ><g fill="none" stroke="#c2c2c2" stroke-width="1.9"><path d="M3 0.8L10.6 11.4M13 0.8L5.4 11.4"/><circle cx="4" cy="12.8" r="2.2"/><circle cx="12" cy="12.8" r="2.2"/></g></svg>
<svg class="a" style="left:329px;top:55px" width="16" height="16" viewBox="0 0 16 16" ><path d="M5 1.4H11.6L14.4 4.2V12.4H5z" fill="#d8d8d8" stroke="#c4c4c4" stroke-width="0.8"/><path d="M11.4 1.4V4.4H14.4" fill="none" stroke="#b9b9b9" stroke-width="0.8"/>
<path d="M1.2 4.4H7.6L10.4 7.2V15.4H1.2z" fill="#d4d4d4" stroke="#c4c4c4" stroke-width="0.8"/><path d="M7.4 4.4V7.4H10.4z" fill="#c6c6c6"/></svg>
<svg class="a" style="left:359px;top:55px" width="16" height="16" viewBox="0 0 16 16" ><defs><linearGradient id="ipa" x1="0" y1="0" x2="1" y2="0"><stop offset="0" stop-color="#ffc040"/><stop offset="0.45" stop-color="#ff9d12"/><stop offset="0.8" stop-color="#ffd468"/><stop offset="1" stop-color="#f59a12"/></linearGradient>
<linearGradient id="ipb" x1="1" y1="0" x2="0.2" y2="1"><stop offset="0" stop-color="#bfe0fb"/><stop offset="0.7" stop-color="#ffffff"/></linearGradient></defs>
<rect x="5.3" y="2.5" width="9.4" height="11.2" rx="0.5" fill="url(#ipa)" stroke="#d68a22" stroke-width="0.9"/>
<path d="M7.6 3.5V2.6Q7.6 1.6 8.6 1.5Q9 0.1 10.3 0.1Q11.6 0.1 12 1.5Q13 1.6 13 2.6V3.5z" fill="#3f97ea" stroke="#1f70cc" stroke-width="0.6"/>
<path d="M9.4 1.2L11.2 2.2" stroke="#c9e8ff" stroke-width="0.8"/>
<path d="M1.8 4.4H7.4L9.9 6.9V14.3Q9.9 15.6 8.6 15.6H1.8Q0.5 15.6 0.5 14.3V5.7Q0.5 4.4 1.8 4.4z" fill="url(#ipb)" stroke="#3d90da" stroke-width="1.1"/>
<path d="M7.2 4.5L9.8 7.1H7.2z" fill="#e0141c"/></svg>
<svg class="a" style="left:389px;top:55px" width="16" height="16" viewBox="0 0 16 16" ><defs><linearGradient id="iu" x1="0" y1="0" x2="0.4" y2="1"><stop offset="0" stop-color="#5cc4fb"/><stop offset="0.6" stop-color="#1c8ae2"/><stop offset="1" stop-color="#0d5cc0"/></linearGradient></defs>
<path d="M0.2 8.4L7.2 1.8L7.4 5.6Q10.4 6 11.6 4.2Q12.2 3 11.4 2.1L15 1.9Q16.8 5.4 13.6 8.4Q11 10.6 7.4 10.4L7.4 14z" fill="url(#iu)" stroke="#2a8ee4" stroke-width="0.5" stroke-linejoin="round"/>
<path d="M1.6 8.2L6.6 3.4" stroke="#9be0ff" stroke-width="0.9"/></svg>
<svg class="a" style="left:419px;top:55px" width="16" height="16" viewBox="0 0 16 16" ><path d="M0.4 14Q0 6.4 8.4 5.4V2L16 7.4L11.2 13.8H7.6Q8.8 10.4 7 9.8Q4.4 10 4.2 14z" fill="#c8c8c8"/></svg>
<svg class="a" style="left:459px;top:55px" width="16" height="16" viewBox="0 0 16 16" ><path d="M4.6 11.2L2.2 13.9" stroke="#9a6208" stroke-width="4.2" stroke-linecap="round"/>
<path d="M4.5 11.2L2.3 13.7" stroke="#eeb02a" stroke-width="2.6" stroke-linecap="round"/>
<path d="M6.4 9.4L5 10.9" stroke="#a8a8a8" stroke-width="1.8"/><circle cx="9.9" cy="6.1" r="5.5" fill="#ffffff" stroke="#3a78e6" stroke-width="1.2"/><circle cx="9.9" cy="6.1" r="4.3" fill="#dcefff"/>
<path d="M7 6.1H12.8M9.9 3.2V9" stroke="#0a2f9a" stroke-width="1.8"/></svg>
<svg class="a" style="left:489px;top:55px" width="16" height="16" viewBox="0 0 16 16" ><path d="M4.6 11.2L2.2 13.9" stroke="#9a6208" stroke-width="4.2" stroke-linecap="round"/>
<path d="M4.5 11.2L2.3 13.7" stroke="#eeb02a" stroke-width="2.6" stroke-linecap="round"/>
<path d="M6.4 9.4L5 10.9" stroke="#a8a8a8" stroke-width="1.8"/><circle cx="9.9" cy="6.1" r="5.5" fill="#9ad2fb" stroke="#3a78e6" stroke-width="1.2"/><ellipse cx="9.6" cy="3.8" rx="3.6" ry="1.9" fill="#dff2ff"/>
<path d="M7.2 6.4H12.8" stroke="#0a2f8a" stroke-width="1.9"/></svg>
<svg class="a" style="left:519px;top:55px" width="16" height="16" viewBox="0 0 16 16" ><path d="M4.6 11.2L2.2 13.9" stroke="#9a6208" stroke-width="4.2" stroke-linecap="round"/>
<path d="M4.5 11.2L2.3 13.7" stroke="#eeb02a" stroke-width="2.6" stroke-linecap="round"/>
<path d="M6.4 9.4L5 10.9" stroke="#a8a8a8" stroke-width="1.8"/><circle cx="9.9" cy="6.1" r="5.5" fill="#8ecbfa" stroke="#3a78e6" stroke-width="1.2"/><ellipse cx="9.2" cy="4.6" rx="3.6" ry="2.8" fill="#e4f4ff"/></svg>
<svg class="a" style="left:549px;top:55px" width="16" height="16" viewBox="0 0 16 16" ><rect x="0.7" y="0.7" width="14" height="14.6" fill="#fdfdff" stroke="#0a2a8c" stroke-width="1.2"/>
<path d="M7.7 2.4L9.7 5H5.7zM7.7 13.6L9.7 11H5.7zM2.2 8L4.8 6V10zM13.2 8L10.6 6V10z" fill="#0a2a8c"/><path d="M7.7 4.4V11.6M4 8H11.4" stroke="#0a2a8c" stroke-width="0.9"/></svg>
<svg class="a" style="left:579px;top:55px" width="16" height="16" viewBox="0 0 16 16" ><rect x="0.7" y="0.7" width="14" height="14.6" fill="#fdfdff" stroke="#0a2a8c" stroke-width="1.2"/>
<rect x="5.1" y="5.4" width="5.2" height="5.2" fill="#fff" stroke="#0a2a8c" stroke-width="1.2"/>
<path d="M7.7 4.8L5.7 2.2H9.7zM7.7 11.2L5.7 13.8H9.7zM4.5 8L1.9 6V10zM10.9 8L13.5 6V10z" fill="#0a2a8c"/></svg>
<svg class="a" style="left:619px;top:55px" width="16" height="16" viewBox="0 0 16 16" ><rect x="2" y="2.6" width="4.6" height="4.6" fill="#d0d0d0" stroke="#b9b9b9" stroke-width="0.9"/><rect x="9.4" y="9.4" width="4.6" height="4.6" fill="#d0d0d0" stroke="#b9b9b9" stroke-width="0.9"/>
<rect x="4.2" y="4.6" width="7.6" height="7.6" fill="#c4c4c4" stroke="#b2b2b2" stroke-width="0.9"/></svg>
<svg class="a" style="left:649px;top:55px" width="16" height="16" viewBox="0 0 16 16" ><rect x="4.2" y="4.6" width="7.6" height="7.6" fill="#c4c4c4" stroke="#b2b2b2" stroke-width="0.9"/>
<rect x="2" y="2.6" width="4.6" height="4.6" fill="#d4d4d4" stroke="#b9b9b9" stroke-width="0.9"/><rect x="9.4" y="9.4" width="4.6" height="4.6" fill="#d4d4d4" stroke="#b9b9b9" stroke-width="0.9"/></svg>
<svg class="a" style="left:679px;top:55px" width="16" height="16" viewBox="0 0 16 16" ><g fill="none" stroke="#b9b9b9" stroke-width="1.3"><rect x="1.6" y="1.6" width="9" height="9"/><rect x="6" y="5.6" width="8.6" height="8.4" fill="#efefef"/></g><rect x="0.30000000000000004" y="0.30000000000000004" width="2.6" height="2.6" fill="#b9b9b9"/><rect x="13.299999999999999" y="0.30000000000000004" width="2.6" height="2.6" fill="#b9b9b9"/><rect x="0.30000000000000004" y="12.7" width="2.6" height="2.6" fill="#b9b9b9"/><rect x="13.299999999999999" y="12.7" width="2.6" height="2.6" fill="#b9b9b9"/></svg>
<svg class="a" style="left:709px;top:55px" width="16" height="16" viewBox="0 0 16 16" ><g fill="none" stroke="#b9b9b9" stroke-width="1.3"><rect x="1.6" y="1.6" width="9" height="9"/><rect x="5.6" y="5.6" width="9" height="8.6" fill="#efefef"/></g><rect x="0.30000000000000004" y="0.30000000000000004" width="2.6" height="2.6" fill="#b9b9b9"/><rect x="9.299999999999999" y="0.30000000000000004" width="2.6" height="2.6" fill="#b9b9b9"/><rect x="0.30000000000000004" y="9.299999999999999" width="2.6" height="2.6" fill="#b9b9b9"/><rect x="4.3" y="4.3" width="2.6" height="2.6" fill="#b9b9b9"/><rect x="13.299999999999999" y="4.3" width="2.6" height="2.6" fill="#b9b9b9"/><rect x="4.3" y="12.899999999999999" width="2.6" height="2.6" fill="#b9b9b9"/><rect x="13.299999999999999" y="12.899999999999999" width="2.6" height="2.6" fill="#b9b9b9"/></svg>
<svg class="a" style="left:737px;top:55px" width="16" height="16" viewBox="0 0 16 16" ><path d="M1 8.6Q4 4 8.4 4.4Q12.4 4.8 15 9Q12 13.4 8 13Q4 12.6 1 8.6z" fill="#d6d6d6" stroke="#b9b9b9" stroke-width="1"/><circle cx="8.2" cy="8.8" r="2.6" fill="#b9b9b9"/><path d="M3 2.6L13.6 13.8" stroke="#b9b9b9" stroke-width="1.5"/><path d="M2 5L5 3.4M11 3.6L14 5.4" stroke="#b9b9b9" stroke-width="0.9"/></svg>
<svg class="a" style="left:764px;top:55px" width="16" height="16" viewBox="0 0 16 16" ><rect x="2.2" y="1.6" width="11.6" height="13.4" fill="#d2d2d2" stroke="#b9b9b9" stroke-width="0.9"/>
<rect x="4.4" y="3.4" width="7.2" height="3" fill="#e6e6e6" stroke="#b9b9b9" stroke-width="0.9"/>
<path d="M2.4 8H13.6M2.4 9.8H13.6M2.4 11.6H13.6M2.4 13.4H13.6" stroke="#b9b9b9" stroke-width="0.8"/></svg>
<svg class="a" style="left:792.5px;top:55px" width="16" height="16" viewBox="0 0 16 16" ><rect x="1.8" y="1.6" width="5.4" height="5.4" fill="#dcdcdc" stroke="#b9b9b9" stroke-width="1"/><path d="M3 4.2L4.4 5.8L6.4 2.6" fill="none" stroke="#b9b9b9" stroke-width="1"/>
<rect x="1.8" y="8.8" width="5.4" height="5.4" fill="#dcdcdc" stroke="#b9b9b9" stroke-width="1"/>
<path d="M9.4 4.2H14.6M9.4 11.4H14.6" stroke="#b9b9b9" stroke-width="1.6"/></svg>
<svg class="a" style="left:822.5px;top:55px" width="16" height="16" viewBox="0 0 16 16" ><rect x="1.6" y="1" width="4.2" height="4.2" fill="#d0d0d0" stroke="#b9b9b9" stroke-width="0.9"/><rect x="9.8" y="10.8" width="4.2" height="4.2" fill="#d0d0d0" stroke="#b9b9b9" stroke-width="0.9"/>
<path d="M7.4 3H13" stroke="#b9b9b9" stroke-width="1" stroke-dasharray="1 1"/><path d="M11.6 1L13.8 3L11.6 5" fill="none" stroke="#b9b9b9" stroke-width="1"/>
<path d="M3.8 7V13" stroke="#b9b9b9" stroke-width="1" stroke-dasharray="1 1"/><path d="M1.8 12.2L3.8 14.4L5.8 12.2" fill="none" stroke="#b9b9b9" stroke-width="1"/></svg>
<svg class="a" style="left:863px;top:55px" width="16" height="16" viewBox="0 0 16 16" ><path d="M2.6 0.2H11.6L15.8 4.4V13.4Q15.8 16 13.2 16H2.6Q0 16 0 13.4V2.8Q0 0.2 2.6 0.2z" fill="#d71a10"/>
<path d="M11.6 0.2L15.8 4.4H12.8Q11.6 4.4 11.6 3.2z" fill="#8e0d08"/>
<path d="M3.2 12.6Q5.6 11 7 7.6Q8 5 7.6 3.6Q7 2.6 6.6 3.8Q6.4 6 8.4 8.6Q10 10.6 12.6 10.4Q13.6 10 12.4 9.6Q9 9 5.6 10.6Q3.6 11.6 3.2 12.6z" fill="none" stroke="#fff" stroke-width="1.1" stroke-linejoin="round"/></svg>
<svg class="a" style="left:893px;top:55px" width="16" height="16" viewBox="0 0 16 16" ><defs><linearGradient id="icl" x1="0" y1="0" x2="1" y2="0"><stop offset="0" stop-color="#4aa6f2"/><stop offset="1" stop-color="#1877d8"/></linearGradient></defs>
<rect x="3" y="0.4" width="10" height="15.4" rx="1.2" fill="url(#icl)" stroke="#1a6fcf" stroke-width="0.7"/>
<rect x="4.2" y="1.8" width="7.6" height="4.2" fill="#ffd978" stroke="#ffb030" stroke-width="0.7"/>
<g fill="#ffd23c"><rect x="4.4" y="7.6" width="1.8" height="1.6"/><rect x="7.1" y="7.6" width="1.8" height="1.6"/><rect x="9.8" y="7.6" width="1.8" height="1.6"/>
<rect x="4.4" y="10.2" width="1.8" height="1.6"/><rect x="7.1" y="10.2" width="1.8" height="1.6"/><rect x="9.8" y="10.2" width="1.8" height="1.6"/>
<rect x="4.4" y="12.8" width="1.8" height="1.6"/><rect x="7.1" y="12.8" width="1.8" height="1.6"/><rect x="9.8" y="12.8" width="1.8" height="1.6"/></g></svg>
<div class="a" style="left:467px;top:84px;width:27px;height:27px;background:#b9cfe8"></div>
<svg class="a" style="left:472px;top:89px" width="16" height="16" viewBox="0 0 16 16" ><rect x="1" y="0.8500000000000001" width="9.5" height="1.5" fill="#a4a4a4"/><rect x="1.6" y="2.35" width="9.5" height="0.6" fill="#d8d8d8"/><rect x="1" y="3.8499999999999996" width="14" height="1.5" fill="#a4a4a4"/><rect x="1.6" y="5.35" width="14" height="0.6" fill="#d8d8d8"/><rect x="1" y="6.85" width="8.5" height="1.5" fill="#a4a4a4"/><rect x="1.6" y="8.35" width="8.5" height="0.6" fill="#d8d8d8"/><rect x="1" y="9.9" width="11" height="1.5" fill="#a4a4a4"/><rect x="1.6" y="11.4" width="11" height="0.6" fill="#d8d8d8"/><rect x="1" y="12.95" width="14" height="1.5" fill="#a4a4a4"/><rect x="1.6" y="14.45" width="14" height="0.6" fill="#d8d8d8"/></svg>
<svg class="a" style="left:499px;top:89px" width="16" height="16" viewBox="0 0 16 16" ><rect x="5" y="0.8500000000000001" width="5.5" height="1.5" fill="#a4a4a4"/><rect x="5.6" y="2.35" width="5.5" height="0.6" fill="#d8d8d8"/><rect x="1" y="3.8499999999999996" width="14" height="1.5" fill="#a4a4a4"/><rect x="1.6" y="5.35" width="14" height="0.6" fill="#d8d8d8"/><rect x="2" y="6.85" width="11.5" height="1.5" fill="#a4a4a4"/><rect x="2.6" y="8.35" width="11.5" height="0.6" fill="#d8d8d8"/><rect x="4" y="9.9" width="7.5" height="1.5" fill="#a4a4a4"/><rect x="4.6" y="11.4" width="7.5" height="0.6" fill="#d8d8d8"/><rect x="1" y="12.95" width="14" height="1.5" fill="#a4a4a4"/><rect x="1.6" y="14.45" width="14" height="0.6" fill="#d8d8d8"/></svg>
<svg class="a" style="left:526px;top:89px" width="16" height="16" viewBox="0 0 16 16" ><rect x="4" y="0.8500000000000001" width="11" height="1.5" fill="#a4a4a4"/><rect x="4.6" y="2.35" width="11" height="0.6" fill="#d8d8d8"/><rect x="1" y="3.8499999999999996" width="14" height="1.5" fill="#a4a4a4"/><rect x="1.6" y="5.35" width="14" height="0.6" fill="#d8d8d8"/><rect x="1.5" y="6.85" width="13.5" height="1.5" fill="#a4a4a4"/><rect x="2.1" y="8.35" width="13.5" height="0.6" fill="#d8d8d8"/><rect x="3" y="9.9" width="12" height="1.5" fill="#a4a4a4"/><rect x="3.6" y="11.4" width="12" height="0.6" fill="#d8d8d8"/><rect x="1" y="12.95" width="14" height="1.5" fill="#a4a4a4"/><rect x="1.6" y="14.45" width="14" height="0.6" fill="#d8d8d8"/></svg>
<svg class="a" style="left:553px;top:89px" width="16" height="16" viewBox="0 0 16 16" ><rect x="1" y="0.8500000000000001" width="14.2" height="1.5" fill="#a4a4a4"/><rect x="1.6" y="2.35" width="14.2" height="0.6" fill="#d8d8d8"/><rect x="1" y="3.8499999999999996" width="14.2" height="1.5" fill="#a4a4a4"/><rect x="1.6" y="5.35" width="14.2" height="0.6" fill="#d8d8d8"/><rect x="1" y="6.85" width="14.2" height="1.5" fill="#a4a4a4"/><rect x="1.6" y="8.35" width="14.2" height="0.6" fill="#d8d8d8"/><rect x="1" y="9.9" width="14.2" height="1.5" fill="#a4a4a4"/><rect x="1.6" y="11.4" width="14.2" height="0.6" fill="#d8d8d8"/><rect x="1" y="12.95" width="14.2" height="1.5" fill="#a4a4a4"/><rect x="1.6" y="14.45" width="14.2" height="0.6" fill="#d8d8d8"/></svg>
<svg class="a" style="left:591.5px;top:89px" width="16" height="16" viewBox="0 0 16 16" ><path d="M1 0V14.4" stroke="#bababa" stroke-width="1.2"/><rect x="3" y="2" width="5.6" height="4" fill="#cecece" stroke="#bababa" stroke-width="1"/><circle cx="5.2" cy="10.6" r="2.3" fill="#cecece" stroke="#bababa" stroke-width="1"/><path d="M15.4 4L10 4M12.12 2.42L10 4L12.12 5.58" fill="none" stroke="#bababa" stroke-width="1.1"/><path d="M15.4 10.6L9 10.6M11.12 9.02L9 10.6L11.12 12.18" fill="none" stroke="#bababa" stroke-width="1.1"/></svg>
<svg class="a" style="left:621.5px;top:89px" width="16" height="16" viewBox="0 0 16 16" ><path d="M15 0V14.4" stroke="#bababa" stroke-width="1.2"/><rect x="7.4" y="2" width="5.6" height="4" fill="#cecece" stroke="#bababa" stroke-width="1"/><circle cx="10.8" cy="10.6" r="2.3" fill="#cecece" stroke="#bababa" stroke-width="1"/><path d="M0.6 4L6 4M3.88 5.58L6 4L3.88 2.42" fill="none" stroke="#bababa" stroke-width="1.1"/><path d="M0.6 10.6L7 10.6M4.88 12.18L7 10.6L4.88 9.02" fill="none" stroke="#bababa" stroke-width="1.1"/></svg>
<svg class="a" style="left:651.5px;top:89px" width="16" height="16" viewBox="0 0 16 16" ><path d="M0.6 0.7H14.6" stroke="#bababa" stroke-width="1.2"/><rect x="2" y="3" width="4.2" height="4.2" fill="#cecece" stroke="#bababa" stroke-width="1"/><circle cx="11" cy="5.1" r="2.3" fill="#cecece" stroke="#bababa" stroke-width="1"/><path d="M4.1 15L4.1 9M5.68 11.12L4.1 9L2.52 11.12" fill="none" stroke="#bababa" stroke-width="1.1"/><path d="M11 15L11 9M12.58 11.12L11 9L9.42 11.12" fill="none" stroke="#bababa" stroke-width="1.1"/></svg>
<svg class="a" style="left:681.5px;top:88.6px" width="16" height="16" viewBox="0 0 16 16" ><path d="M0.6 14.6H14.6" stroke="#bababa" stroke-width="1.2"/><rect x="2" y="8.2" width="4.2" height="4.2" fill="#cecece" stroke="#bababa" stroke-width="1"/><circle cx="11" cy="10.3" r="2.3" fill="#cecece" stroke="#bababa" stroke-width="1"/><path d="M4.1 0.4L4.1 6.4M2.52 4.28L4.1 6.4L5.68 4.28" fill="none" stroke="#bababa" stroke-width="1.1"/><path d="M11 0.4L11 6.4M9.42 4.28L11 6.4L12.58 4.28" fill="none" stroke="#bababa" stroke-width="1.1"/></svg>
<svg class="a" style="left:711.5px;top:88.8px" width="16" height="16" viewBox="0 0 16 16" ><path d="M8 0V16" stroke="#bababa" stroke-width="1"/><rect x="5.8" y="2" width="4.4" height="4.4" fill="#cecece" stroke="#bababa" stroke-width="1"/><circle cx="8" cy="11.6" r="2.5" fill="#cecece" stroke="#bababa" stroke-width="1"/><path d="M0.6 4.2L4.6 4.2M2.97 5.42L4.6 4.2L2.97 2.98" fill="none" stroke="#bababa" stroke-width="1.1"/><path d="M15.4 4.2L11.4 4.2M13.03 2.98L11.4 4.2L13.03 5.42" fill="none" stroke="#bababa" stroke-width="1.1"/><path d="M0.6 11.6L4.4 11.6M2.77 12.82L4.4 11.6L2.77 10.38" fill="none" stroke="#bababa" stroke-width="1.1"/><path d="M15.4 11.6L11.6 11.6M13.23 10.38L11.6 11.6L13.23 12.82" fill="none" stroke="#bababa" stroke-width="1.1"/></svg>
<svg class="a" style="left:741.8px;top:88.8px" width="16" height="16" viewBox="0 0 16 16" ><path d="M0 8H16" stroke="#bababa" stroke-width="1"/><circle cx="4.4" cy="8" r="2.5" fill="#cecece" stroke="#bababa" stroke-width="1"/><rect x="9.6" y="5.8" width="4.4" height="4.4" fill="#cecece" stroke="#bababa" stroke-width="1"/><path d="M4.4 0.6L4.4 4.4M3.18 2.77L4.4 4.4L5.62 2.77" fill="none" stroke="#bababa" stroke-width="1.1"/><path d="M4.4 15.4L4.4 11.6M5.62 13.23L4.4 11.6L3.18 13.23" fill="none" stroke="#bababa" stroke-width="1.1"/><path d="M11.8 0.6L11.8 4.6M10.58 2.97L11.8 4.6L13.02 2.97" fill="none" stroke="#bababa" stroke-width="1.1"/><path d="M11.8 15.4L11.8 11.4M13.02 13.03L11.8 11.4L10.58 13.03" fill="none" stroke="#bababa" stroke-width="1.1"/></svg>
<svg class="a" style="left:782px;top:89px" width="16" height="16" viewBox="0 0 16 16" ><rect x="0.5" y="1.5" width="15" height="13" rx="1.2" fill="#d6d6d6" stroke="#c0c0c0" stroke-width="1"/><rect x="6.4" y="3.6" width="3.2" height="8.8" fill="#dedede" stroke="#bababa" stroke-width="1"/><path d="M2 8L5.4 8M3.96 9.08L5.4 8L3.96 6.92" fill="none" stroke="#bababa" stroke-width="1.1"/><path d="M14 8L10.6 8M12.04 6.92L10.6 8L12.04 9.08" fill="none" stroke="#bababa" stroke-width="1.1"/></svg>
<svg class="a" style="left:812px;top:88.6px" width="16" height="16" viewBox="0 0 16 16" ><rect x="0.5" y="0.5" width="15" height="13" rx="1.2" fill="#d6d6d6" stroke="#c0c0c0" stroke-width="1"/><rect x="3.4" y="5.6" width="9.2" height="3.2" fill="#dedede" stroke="#bababa" stroke-width="1"/><path d="M8 1.4L8 4.6M6.92 3.16L8 4.6L9.08 3.16" fill="none" stroke="#bababa" stroke-width="1.1"/><path d="M8 13L8 9.8M9.08 11.24L8 9.8L6.92 11.24" fill="none" stroke="#bababa" stroke-width="1.1"/></svg>
<svg class="a" style="left:842px;top:89px" width="16" height="16" viewBox="0 0 16 16" ><rect x="0.4" y="4" width="2.8" height="6.8" fill="#cecece" stroke="#bababa" stroke-width="0.9"/><rect x="12.8" y="4" width="2.8" height="6.8" fill="#cecece" stroke="#bababa" stroke-width="0.9"/><path d="M8 7.4L4.4 7.4M5.84 6.32L4.4 7.4L5.84 8.48" fill="none" stroke="#bababa" stroke-width="1.1"/><path d="M8 7.4L11.6 7.4M10.16 8.48L11.6 7.4L10.16 6.32" fill="none" stroke="#bababa" stroke-width="1.1"/></svg>
<svg class="a" style="left:871.8px;top:88.8px" width="16" height="16" viewBox="0 0 16 16" ><rect x="4.4" y="0.4" width="6.8" height="3" fill="#cecece" stroke="#bababa" stroke-width="0.9"/><rect x="4.4" y="11.8" width="6.8" height="3" fill="#cecece" stroke="#bababa" stroke-width="0.9"/><path d="M7.8 7.6L7.8 4.4M8.81 5.75L7.8 4.4L6.79 5.75" fill="none" stroke="#bababa" stroke-width="1.1"/><path d="M7.8 7.6L7.8 10.8M6.79 9.45L7.8 10.8L8.81 9.45" fill="none" stroke="#bababa" stroke-width="1.1"/><path d="M5.6 7.6H10" stroke="#bababa" stroke-width="0.9"/></svg>
<svg class="a" style="left:913.6px;top:89.4px" width="16" height="16" viewBox="0 0 16 16" ><path d="M3 6.4V3.6Q6 0.6 9.6 2.2Q11.2 3.2 11.4 5.6" fill="none" stroke="#bababa" stroke-width="1.5"/><path d="M1.2 2V6.6H5.8z" fill="#bababa"/><text x="6.5" y="13.7" font-family="Liberation Mono,monospace" font-weight="bold" font-size="8.2" letter-spacing="-0.55" text-anchor="middle" fill="#bababa">90°</text></svg>
<svg class="a" style="left:942.4px;top:89.4px" width="16" height="16" viewBox="0 0 16 16" ><path d="M3.4 6.4V4Q8 0 12.6 4V6.4" fill="none" stroke="#bababa" stroke-width="1.5"/><path d="M1 2V6.8H5.6z" fill="#bababa"/><path d="M15 2V6.8H10.4z" fill="#bababa"/><text x="8" y="13.7" font-family="Liberation Mono,monospace" font-weight="bold" font-size="8.2" letter-spacing="-0.55" text-anchor="middle" fill="#bababa">180°</text></svg>
<svg class="a" style="left:973.6px;top:89.4px" width="16" height="16" viewBox="0 0 16 16" ><path d="M3 6.4V3.6Q6 0.6 9.6 2.2" fill="none" stroke="#bababa" stroke-width="1.5"/><text x="0.4" y="13.7" font-family="Liberation Mono,monospace" font-weight="bold" font-size="8.2" letter-spacing="-0.55" fill="#bababa">90°</text></svg>
<div class="a t" style="left:330.70px;top:89.86px;font:bold 13.3px/14.86px 'Liberation Sans',sans-serif;color:#b4b4b4;transform:scaleX(0.92);transform-origin:0 0;">B</div>
<div class="a t" style="left:358.80px;top:88.78px;font:bold 14.5px/16.05px 'Liberation Serif',sans-serif;color:#b4b4b4;font-style:italic;">I</div>
<div class="a t" style="left:384.50px;top:90.14px;font:bold 13px/14.52px 'Liberation Sans',sans-serif;color:#b4b4b4;transform:scaleX(0.95);transform-origin:0 0;">U</div>
<div class="a" style="left:385px;top:102.6px;width:8.8px;height:1.1px;background:#b4b4b4"></div>
<div class="a t" style="left:412.20px;top:89.76px;font:bold 13.3px/14.86px 'Liberation Sans',sans-serif;color:#b4b4b4;transform:scaleX(0.94);transform-origin:0 0;">S</div>
<div class="a" style="left:411.6px;top:96.4px;width:9.6px;height:1.2px;background:#b4b4b4"></div>
<svg class="a" style="left:435px;top:86.6px" width="16" height="16"><g font-family="Liberation Sans,sans-serif" font-size="7.4" fill="none" stroke="#bcbcbc" stroke-width="0.65"><text x="0.6" y="11.6" transform="rotate(-12 3 9)">A</text><text x="5.4" y="9.4">B</text><text x="10" y="11.8" transform="rotate(10 12 9)">C</text></g></svg>
<svg class="a" style="left:13.5px;top:121.5px" width="16" height="16" viewBox="0 0 16 16" ><defs><linearGradient id="ks" x1="0" y1="0" x2="1" y2="1"><stop offset="0" stop-color="#bff4ff"/><stop offset="1" stop-color="#ffffff"/></linearGradient></defs>
<path d="M4.8 1.4V12.2L7.6 9.8L9.8 14.6L11.8 13.7L9.6 9.1L13.2 8.7z" fill="url(#ks)" stroke="#1a40b6" stroke-width="1.25" stroke-linejoin="round"/></svg>
<svg class="a" style="left:13.5px;top:150.8px" width="16" height="16" viewBox="0 0 16 16" ><path d="M11 7.6A4.3 4.3 0 1 0 7.4 12.7" fill="none" stroke="#c7c7c7" stroke-width="4.7"/><path d="M6.6 7.4H16.6L11.8 14.4z" fill="#c2c2c2"/></svg>
<svg class="a" style="left:13.5px;top:191.5px" width="16" height="16" viewBox="0 0 16 16" ><path d="M2.2 3.2L14.6 12" stroke="#1f4cb4" stroke-width="3.3" stroke-linecap="round"/><path d="M2.4 3.3L14.4 11.9" stroke="#8db4ee" stroke-width="1.1" stroke-linecap="round" stroke-dasharray="1 1"/></svg>
<svg class="a" style="left:13.5px;top:221.5px" width="16" height="16" viewBox="0 0 16 16" ><defs><linearGradient id="k1" x1="0" y1="0" x2="0" y2="1"><stop offset="0" stop-color="#a9d6ff"/><stop offset="1" stop-color="#ffffff"/></linearGradient></defs><rect x="0.8" y="1.4" width="14.6" height="13" rx="3.8" fill="url(#k1)" stroke="#1f4cb4" stroke-width="1.2"/></svg>
<svg class="a" style="left:13.5px;top:251.5px" width="16" height="16" viewBox="0 0 16 16" ><defs><linearGradient id="k2" x1="0" y1="0" x2="0" y2="1"><stop offset="0" stop-color="#a9d6ff"/><stop offset="1" stop-color="#ffffff"/></linearGradient></defs><ellipse cx="8.2" cy="8.2" rx="7.4" ry="6.3" fill="url(#k2)" stroke="#1f4cb4" stroke-width="1.2"/></svg>
<svg class="a" style="left:13.5px;top:281.5px" width="16" height="16" viewBox="0 0 16 16" ><g transform="translate(-0.7 -0.6)"><defs><linearGradient id="k3" x1="0" y1="0" x2="0" y2="1"><stop offset="0" stop-color="#a9d6ff"/><stop offset="1" stop-color="#ffffff"/></linearGradient></defs><rect x="2.1" y="2.3" width="13" height="12.6" rx="1.2" fill="url(#k3)" stroke="#1f4cb4" stroke-width="1.4"/>
<path d="M3 14V12.6L6.6 8.2L9.2 11.2L10.6 10L14.2 13.4V14z" fill="#fdfeff"/>
<path d="M3 12.8L6.6 8.3L9.2 11.3M8.6 11.8L10.6 10.1L14.2 13.4" fill="none" stroke="#5f7fc0" stroke-width="0.8"/>
<path d="M4 13.6L7.2 9.6M5.4 13.8L8 10.6" stroke="#b4c2dc" stroke-width="0.7"/>
<circle cx="10.8" cy="6.4" r="1.8" fill="#e6f2ff" stroke="#e23a3c" stroke-width="1.05"/></g></svg>
<svg class="a" style="left:13.5px;top:311.5px" width="16" height="16" viewBox="0 0 16 16" ><g transform="translate(-0.7 -0.6)"><rect x="2.1" y="2.3" width="13" height="12.6" rx="1.2" fill="#78f0f6" stroke="#1b8a3c" stroke-width="1.4"/>
<path d="M8 14L10.6 10.2L14.2 13.4V14z" fill="#3a92dc"/>
<path d="M3.2 13.2L6.8 8.9" stroke="#ffd21e" stroke-width="2.6"/>
<path d="M2.8 12.4L6.6 8L9.3 11.2M8.7 11.8L10.6 10L14.4 13.4" fill="none" stroke="#1a7a36" stroke-width="0.9"/>
<circle cx="10.8" cy="6.4" r="1.8" fill="#8ef0f4" stroke="#e23a3c" stroke-width="1.05"/></g></svg>
<svg class="a" style="left:13.5px;top:341.5px" width="16" height="16" viewBox="0 0 16 16" ><text x="7.7" y="14.2" font-family="Liberation Serif,serif" font-weight="bold" font-size="17.5" text-anchor="middle" fill="#1c3faa" stroke="#1c3faa" stroke-width="0.5">A</text></svg>
<svg class="a" style="left:13.5px;top:371.5px" width="16" height="16" viewBox="0 0 16 16" ><text x="1.6" y="9.4" font-family="Liberation Serif,serif" font-weight="bold" font-size="9.2" fill="#1c3faa" stroke="#1c3faa" stroke-width="0.35">R</text><path d="M9.5 6H15.5M9.5 9H15.5M1.5 12H15.5M1.5 15H15.5" stroke="#484848" stroke-width="1"/><path d="M9.5 3.6H15.5" stroke="#b0b0b0" stroke-width="0.6"/></svg>
<svg class="a" style="left:13.5px;top:401.5px" width="16" height="16" viewBox="0 0 16 16" ><defs><linearGradient id="k4" x1="0" y1="0" x2="0" y2="1"><stop offset="0" stop-color="#a9d6ff"/><stop offset="1" stop-color="#ffffff"/></linearGradient></defs><rect x="0.8" y="1.8" width="15.2" height="12.8" rx="3.8" fill="url(#k4)" stroke="#1f4cb4" stroke-width="1.1"/><g fill="#1c3faa"><rect x="4.6" y="5.3" width="1.9" height="6.6"/><rect x="7.5" y="5.3" width="1.2" height="6.6"/><rect x="9.6" y="5.3" width="1.4" height="6.6"/><rect x="12.1" y="5.3" width="1" height="6.6"/></g></svg>
<svg class="a" style="left:13.5px;top:431.5px" width="16" height="16" viewBox="0 0 16 16" ><defs><linearGradient id="k5" x1="0" y1="0" x2="0" y2="1"><stop offset="0" stop-color="#a9d6ff"/><stop offset="1" stop-color="#ffffff"/></linearGradient></defs><rect x="0.8" y="2" width="15.2" height="12.8" rx="3.8" fill="url(#k5)" stroke="#1f4cb4" stroke-width="1.1"/><path d="M8.2 3.8L13.7 11.6H2.7z" fill="none" stroke="#f41414" stroke-width="0.9" stroke-linejoin="round"/><circle cx="8.2" cy="9.1" r="2.3" fill="none" stroke="#f41414" stroke-width="0.9"/></svg>
<svg class="a" style="left:13.5px;top:461.5px" width="16" height="16" viewBox="0 0 16 16" ><rect x="1.6" y="1.4" width="13" height="13" rx="0.8" fill="#d6ecff" stroke="#1f4cb4" stroke-width="1.5"/>
<g fill="none" stroke="#1c3faa" stroke-width="1.1"><rect x="4" y="4" width="3.4" height="3.4"/><path d="M9.4 3.6V7.6H12.4V3.6M4 10V11.8H6.6M8.6 10.2H10.2V12.4M12.2 9V12.4"/></g></svg>
<svg class="a" style="left:13.5px;top:491.5px" width="16" height="16" viewBox="0 0 16 16" ><path d="M1.7 3.8H5.2Q7.3 3.8 8.3 6.8L9.3 9.7Q10.3 12.7 12.2 12.7H15.3" fill="none" stroke="#1f4cb4" stroke-width="3.3" stroke-linecap="round" stroke-linejoin="round"/><path d="M1.7 3.8H5.2Q7.3 3.8 8.3 6.8L9.3 9.7Q10.3 12.7 12.2 12.7H15.3" fill="none" stroke="#9dbdf0" stroke-width="0.9" stroke-linecap="round"/></svg>
<svg class="a" style="left:13.5px;top:521.5px" width="16" height="16" viewBox="0 0 16 16" ><path d="M2 11.2V9.8Q2.3 5.8 6.8 5.8H10.4Q14.9 5.8 15.2 9.8V11.2" fill="none" stroke="#1f4cb4" stroke-width="3.3" stroke-linecap="round"/><path d="M2 11.2V9.8Q2.3 5.8 6.8 5.8H10.4Q14.9 5.8 15.2 9.8V11.2" fill="none" stroke="#9dbdf0" stroke-width="0.9" stroke-linecap="round"/></svg>
<svg class="a" style="left:13.5px;top:551.5px" width="16" height="16" viewBox="0 0 16 16" ><defs><linearGradient id="k6" x1="0" y1="0" x2="0" y2="1"><stop offset="0" stop-color="#a9d6ff"/><stop offset="1" stop-color="#ffffff"/></linearGradient></defs><path d="M2.6 1.4H12.4L8.8 6.8L15 13.8L14.4 15H2.6z" fill="url(#k6)" stroke="#1f4cb4" stroke-width="1.2" stroke-linejoin="round"/></svg>
<svg class="a" style="left:13.5px;top:581.5px" width="16" height="16" viewBox="0 0 16 16" ><defs><linearGradient id="k7" x1="0" y1="0" x2="0" y2="1"><stop offset="0" stop-color="#a9d6ff"/><stop offset="1" stop-color="#ffffff"/></linearGradient></defs><path d="M8.5 2.2L15.4 14H1.6z" fill="url(#k7)" stroke="#1f4cb4" stroke-width="1.2" stroke-linejoin="round"/></svg>
<svg class="a" style="left:13.5px;top:611.5px" width="16" height="16" viewBox="0 0 16 16" ><defs><linearGradient id="k8" x1="0" y1="0" x2="0" y2="1"><stop offset="0" stop-color="#a9d6ff"/><stop offset="1" stop-color="#ffffff"/></linearGradient></defs><path d="M8.5 1.2L16.2 8.3L8.5 15.4L0.8 8.3z" fill="url(#k8)" stroke="#1f4cb4" stroke-width="1.2" stroke-linejoin="round"/></svg>
<svg class="a" style="left:13.5px;top:641.5px" width="16" height="16" viewBox="0 0 16 16" ><defs><linearGradient id="k9" x1="0" y1="0" x2="0" y2="1"><stop offset="0" stop-color="#a9d6ff"/><stop offset="1" stop-color="#ffffff"/></linearGradient></defs><path d="M5.4 3.6H16.4L12 12.8H0.6z" fill="url(#k9)" stroke="#1f4cb4" stroke-width="1.2" stroke-linejoin="round"/></svg>
</body></html>
